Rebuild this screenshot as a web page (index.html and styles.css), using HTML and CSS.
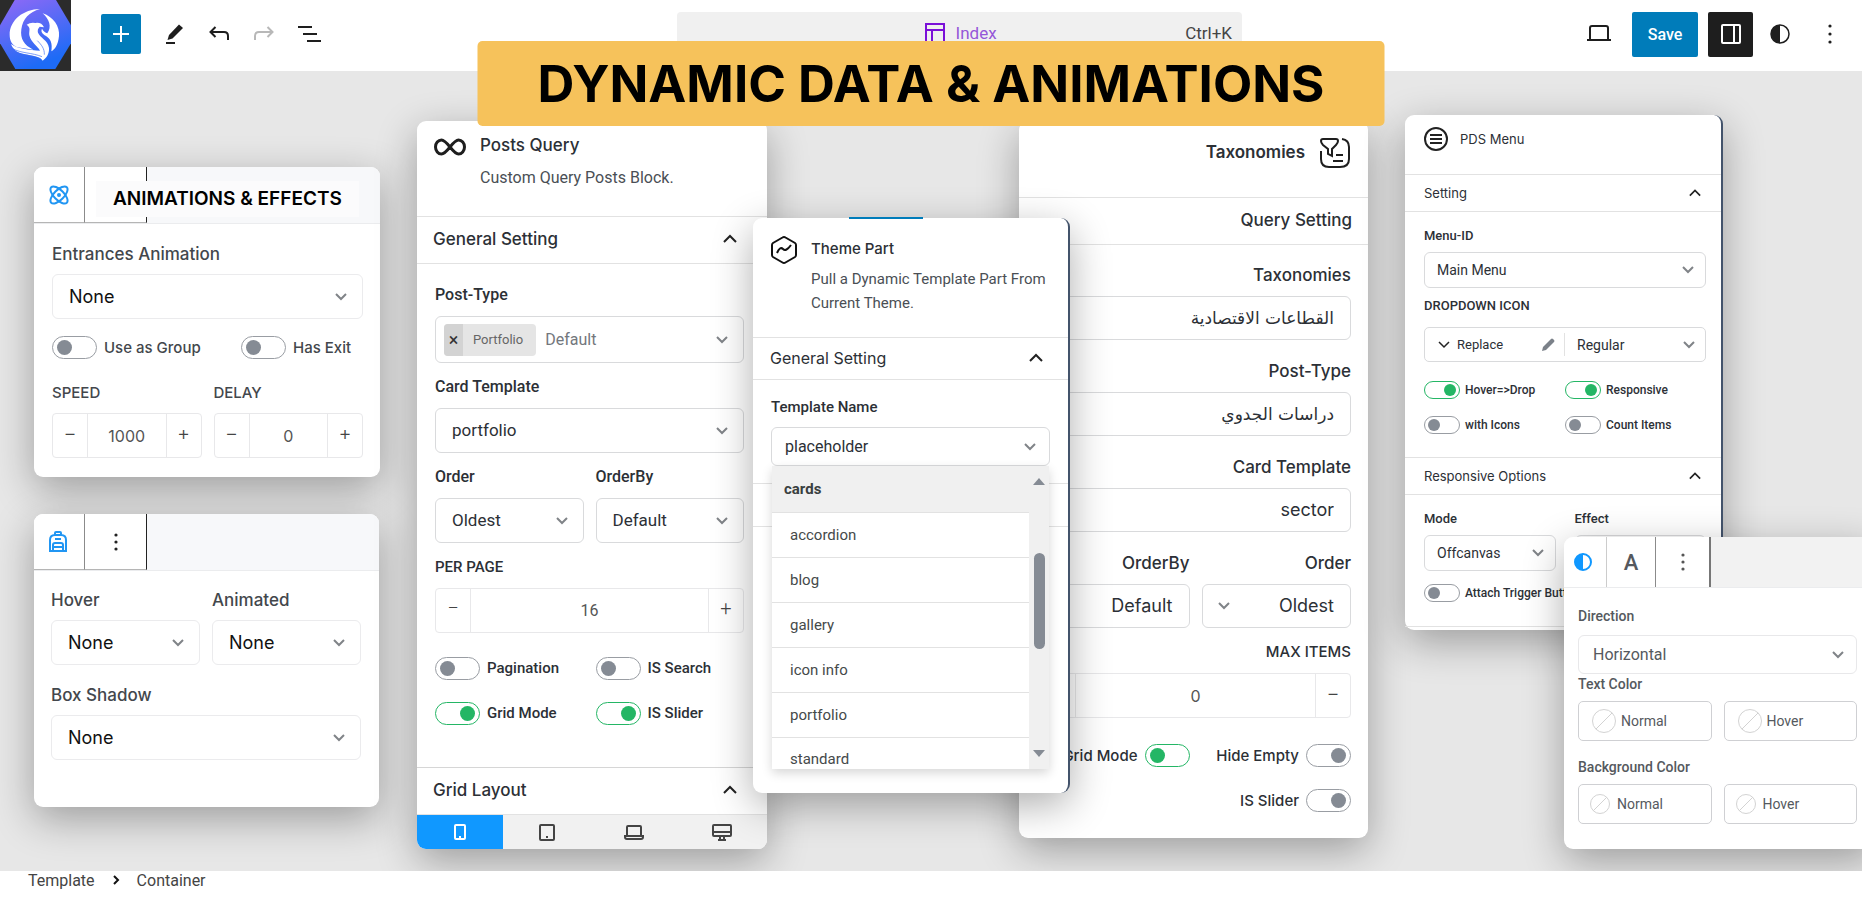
FILE: index.html
```html
<!DOCTYPE html>
<html lang="en">
<head>
<meta charset="utf-8">
<title>Dynamic Data &amp; Animations</title>
<link rel="stylesheet" href="styles.css">
</head>
<body>
<header class="topbar">
  <svg class="logo" viewBox="0 0 213 213" aria-hidden="true">
    <defs><linearGradient id="hex" x1="0" y1="0" x2="0.4" y2="1"><stop offset="0" stop-color="#9069f6"/><stop offset="1" stop-color="#1d6bf6"/></linearGradient></defs>
    <rect width="213" height="213" fill="#2b2b2b"/>
    <path d="M44 0H168L213 76V130L166 207H46L0 130V76Z" fill="url(#hex)"/>
    <g fill="#fff">
      <path d="M120 27C70 28 29 60 29 105C29 122 36 136 52 142L100 149C72 136 60 116 64 88C68 56 88 36 120 27Z"/>
      <path d="M80 74Q92 66 106 69Q124 66 132 82L119 80Q111 88 114 98C120 114 144 120 147 144C148 162 140 173 128 182C124 172 100 168 75 163C50 158 38 147 33 132C50 146 90 150 120 152C114 140 92 126 88 106C86 92 94 84 80 74Z"/>
      <path d="M128 40C160 50 180 80 177 108C174 135 165 148 154 154C158 130 152 117 138 108C126 101 122 94 126 86C130 94 136 98 142 100C156 80 148 58 128 40Z"/>
    </g>
    <path d="M38 146C62 160 98 158 126 170M46 156C68 168 96 164 122 176M112 122C124 134 134 146 133 164" fill="none" stroke="#3c6cf3" stroke-width="2"/>
  </svg>
  <div class="tools">
    <button class="add" aria-label="Add block"><svg width="24" height="24" viewBox="0 0 24 24"><path d="M12 4v16M4 12h16" stroke="#fff" stroke-width="2"/></svg></button>
    <button class="tool" aria-label="Tools"><svg width="24" height="24" viewBox="0 0 24 24"><path d="M17 2.500l4 3.500-10.500 10.500-5 1.500 1.500-5z" fill="#1e1e1e"/><path d="M4 21h9" stroke="#1e1e1e" stroke-width="2"/></svg></button>
    <button class="tool" aria-label="Undo"><svg width="24" height="24" viewBox="0 0 24 24"><path d="M8.500 5L3.500 10l5 5M3.500 10H17q4 0 4 4v4" fill="none" stroke="#1e1e1e" stroke-width="2"/></svg></button>
    <button class="tool" aria-label="Redo" disabled><svg width="24" height="24" viewBox="0 0 24 24"><path d="M15.500 5l5 5-5 5M20.500 10H7q-4 0-4 4v4" fill="none" stroke="#b8b8b8" stroke-width="2"/></svg></button>
    <button class="tool" aria-label="Document overview"><svg width="26" height="24" viewBox="0 0 26 24"><path d="M1 5h14M6 12h14M10 19h14" stroke="#1e1e1e" stroke-width="2"/></svg></button>
  </div>
  <button class="command">
    <span class="command-title"><svg width="22" height="22" viewBox="0 0 22 22"><path d="M2 2h18v18H2zM2 8h18M8 8v12" fill="none" stroke="#7b10d8" stroke-width="2"/></svg>Index</span>
    <span class="command-key">Ctrl+K</span>
  </button>
  <div class="actions">
    <button class="tool" aria-label="View"><svg width="28" height="24" viewBox="0 0 28 24"><path d="M5 17V6q0-2 2-2h14q2 0 2 2v11" fill="none" stroke="#1e1e1e" stroke-width="2"/><path d="M2 18h24" stroke="#1e1e1e" stroke-width="2"/></svg></button>
    <button class="save">Save</button>
    <button class="settings" aria-label="Settings"><svg width="22" height="22" viewBox="0 0 22 22"><rect x="2" y="2" width="18" height="18" rx="1" fill="none" stroke="#fff" stroke-width="2"/><path d="M14 2v18" stroke="#fff" stroke-width="2"/></svg></button>
    <button class="tool" aria-label="Styles"><svg width="22" height="22" viewBox="0 0 22 22"><circle cx="11" cy="11" r="9" fill="none" stroke="#1e1e1e" stroke-width="1.500"/><path d="M11 2a9 9 0 0 0 0 18z" fill="#1e1e1e"/></svg></button>
    <button class="tool" aria-label="Options"><svg width="22" height="22" viewBox="0 0 22 22"><g fill="#1e1e1e"><circle cx="11" cy="3" r="1.600"/><circle cx="11" cy="11" r="1.600"/><circle cx="11" cy="19" r="1.600"/></g></svg></button>
  </div>
</header>

<main class="canvas">
  <section class="panel soft effects">
    <div class="tabs">
      <button class="tab" aria-label="Effects"><svg width="20" height="20" viewBox="0 0 20 20" fill="none" stroke="#2196f3" stroke-width="2"><ellipse cx="10" cy="10" rx="11" ry="5" transform="rotate(45 10 10)"/><ellipse cx="10" cy="10" rx="11" ry="5" transform="rotate(-45 10 10)"/><circle cx="10" cy="10" r="1"/></svg></button>
      <button class="tab wide dark" aria-label="Options"></button>
      <h2 class="badge">ANIMATIONS &amp; EFFECTS</h2>
    </div>
    <div class="body">
      <label class="label" for="entrance">Entrances Animation</label>
      <select id="entrance" class="control"><option>None</option></select>
      <div class="switches">
        <label class="switch"><input type="checkbox">Use as Group</label>
        <label class="switch"><input type="checkbox">Has Exit</label>
      </div>
      <div class="pair">
        <div><label class="label caps" for="speed">SPEED</label>
          <div class="stepper"><button aria-label="Less">−</button><input id="speed" value="1000"><button aria-label="More">+</button></div></div>
        <div><label class="label caps" for="delay">DELAY</label>
          <div class="stepper"><button aria-label="Less">−</button><input id="delay" value="0"><button aria-label="More">+</button></div></div>
      </div>
    </div>
  </section>

  <section class="panel soft hover">
    <div class="tabs">
      <button class="tab" aria-label="Container"><svg width="20" height="22" viewBox="0 0 20 22" fill="none" stroke="#2196f3" stroke-width="2"><path d="M7 4V2q0-1 1-1h4q1 0 1 1v2M2 20V9q0-5 5-5h6q5 0 5 5v11zM5 20v-6q0-2 2-2h6q2 0 2 2v6M5 16h10M7 8h6"/></svg></button>
      <button class="tab wide dark" aria-label="Options"><svg width="6" height="20" viewBox="0 0 6 20"><g fill="#222"><circle cx="3" cy="3" r="1.600"/><circle cx="3" cy="10" r="1.600"/><circle cx="3" cy="17" r="1.600"/></g></svg></button>
    </div>
    <div class="body">
      <div class="pair">
        <div><label class="label" for="hover">Hover</label><select id="hover" class="control"><option>None</option></select></div>
        <div><label class="label" for="animated">Animated</label><select id="animated" class="control"><option>None</option></select></div>
      </div>
      <label class="label" for="shadow">Box Shadow</label>
      <select id="shadow" class="control"><option>None</option></select>
    </div>
  </section>

  <section class="panel query">
    <div class="intro">
      <svg width="32" height="20" viewBox="0 0 32 20"><path d="M16 10C12 5 10 3 7.500 3a6 7 0 0 0 0 14C10 17 12 15 16 10S22 3 24.500 3a6 7 0 0 1 0 14C22 17 20 15 16 10Z" fill="none" stroke="#1e1e1e" stroke-width="3"/></svg>
      <div><h2>Posts Query</h2><p>Custom Query Posts Block.</p></div>
    </div>
    <button class="section">General Setting<svg class="up" viewBox="0 0 14 10"><path d="M1 8l6-6 6 6"/></svg></button>
    <div class="body">
      <label class="label" for="ptype">Post-Type</label>
      <div class="control tags"><span class="tag"><button aria-label="Remove Portfolio">×</button><span>Portfolio</span></span><input id="ptype" placeholder="Default"></div>
      <label class="label" for="card">Card Template</label>
      <select id="card" class="control"><option>portfolio</option></select>
      <div class="pair">
        <div><label class="label" for="order">Order</label><select id="order" class="control"><option>Oldest</option></select></div>
        <div><label class="label" for="orderby">OrderBy</label><select id="orderby" class="control"><option>Default</option></select></div>
      </div>
      <label class="label caps" for="perpage">PER PAGE</label>
      <div class="stepper"><button aria-label="Less">−</button><input id="perpage" value="16"><button aria-label="More">+</button></div>
      <div class="switches">
        <label class="switch"><input type="checkbox">Pagination</label>
        <label class="switch"><input type="checkbox">IS Search</label>
        <label class="switch"><input type="checkbox" checked>Grid Mode</label>
        <label class="switch"><input type="checkbox" checked>IS Slider</label>
      </div>
    </div>
    <button class="section">Grid Layout<svg class="up" viewBox="0 0 14 10"><path d="M1 8l6-6 6 6"/></svg></button>
    <div class="devices">
      <button class="on" aria-label="Phone"><svg width="22" height="20" viewBox="0 0 22 20"><rect x="6" y="3" width="10" height="14" rx="1"/><path d="M10 15h2"/></svg></button>
      <button aria-label="Tablet"><svg width="22" height="20" viewBox="0 0 22 20"><rect x="4" y="3" width="14" height="15" rx="1"/><path d="M10 15h2"/></svg></button>
      <button aria-label="Laptop"><svg width="22" height="20" viewBox="0 0 22 20"><path d="M4 13V5q0-1 1-1h12q1 0 1 1v8M2 14h18v1q0 2-2 2H4q-2 0-2-2z"/></svg></button>
      <button aria-label="Desktop"><svg width="22" height="20" viewBox="0 0 22 20"><rect x="2" y="3" width="18" height="11" rx="1"/><path d="M2 10h18M9 14v4M13 14v4M7 18h8"/></svg></button>
    </div>
  </section>

  <section class="panel taxonomy" dir="rtl">
    <div class="intro">
      <svg width="32" height="32" viewBox="0 0 32 32" fill="none" stroke="#1e1e1e" stroke-width="2"><path d="M2 4q0-2 2-2h13q2 0 2 2 0 2-2 4l-4 4v7l-4-2v-5L4 8Q2 6 2 4zM2 14v8q0 8 8 8h11q9 0 9-8V10q0-7-7-8M17 18h7M14 24h10"/></svg>
      <h2>Taxonomies</h2>
    </div>
    <button class="section">Query Setting</button>
    <div class="body">
      <label class="label" for="tax">Taxonomies</label>
      <select id="tax" class="control arabic"><option>القطاعات الاقتصادية</option></select>
      <label class="label" for="tptype">Post-Type</label>
      <select id="tptype" class="control arabic"><option>دراسات الجدوي</option></select>
      <label class="label" for="tcard">Card Template</label>
      <select id="tcard" class="control"><option>sector</option></select>
      <div class="pair">
        <div><label class="label" for="torder">Order</label><select id="torder" class="control"><option>Oldest</option></select></div>
        <div><label class="label" for="torderby">OrderBy</label><select id="torderby" class="control"><option>Default</option></select></div>
      </div>
      <label class="label caps" for="max">MAX ITEMS</label>
      <div class="stepper"><button aria-label="Less">−</button><input id="max" value="0"><button aria-label="More">+</button></div>
      <div class="switches">
        <label class="switch"><input type="checkbox">Hide Empty</label>
        <label class="switch"><input type="checkbox" checked>Grid Mode</label>
        <label class="switch"><input type="checkbox">IS Slider</label>
      </div>
    </div>
  </section>

  <section class="panel theme">
    <div class="intro">
      <svg width="28" height="30" viewBox="0 0 28 30" fill="none" stroke="#111" stroke-width="2"><path d="M12.500 2.500q1.500-1 3 0L25 8q1 .7 1 2v10q0 1.300-1 2l-9.500 5.500q-1.500 1-3 0L3 22q-1-.7-1-2V10q0-1.300 1-2z"/><path d="M7 18q3-7 6-4t8-4"/></svg>
      <div><h2>Theme Part</h2><p>Pull a Dynamic Template Part From Current Theme.</p></div>
    </div>
    <button class="section">General Setting<svg class="up" viewBox="0 0 14 10"><path d="M1 8l6-6 6 6"/></svg></button>
    <div class="body">
      <label class="label" for="tname">Template Name</label>
      <div class="combo">
        <select id="tname" class="control"><option>placeholder</option></select>
        <div class="menu">
          <div class="menu-list">
            <strong>cards</strong>
            <ul><li>accordion</li><li>blog</li><li>gallery</li><li>icon info</li><li>portfolio</li><li>standard</li></ul>
          </div>
          <div class="scrollbar"><span class="arrow-up"></span><span class="thumb"></span><span class="arrow-down"></span></div>
        </div>
      </div>
    </div>
    <div class="rule"></div>
  </section>

  <section class="panel pds">
    <div class="intro">
      <svg width="24" height="24" viewBox="0 0 24 24" fill="none" stroke="#222" stroke-width="2"><circle cx="12" cy="12" r="11"/><path d="M6 8h12M6 12h12M6 16h12"/></svg>
      <h2>PDS Menu</h2>
    </div>
    <button class="section">Setting<svg class="up" viewBox="0 0 14 10"><path d="M1 8l6-6 6 6"/></svg></button>
    <div class="body">
      <label class="label" for="menuid">Menu-ID</label>
      <select id="menuid" class="control"><option>Main Menu</option></select>
      <label class="label" for="weight">DROPDOWN ICON</label>
      <div class="icon-field">
        <button><svg width="12" height="8" viewBox="0 0 12 8"><path d="M1 1l5 5 5-5" fill="none" stroke="#222" stroke-width="1.500"/></svg>Replace<svg class="pen" width="14" height="14" viewBox="0 0 14 14"><path d="M1 13l1-4 8-8q1-1 2 0l1 1q1 1 0 2l-8 8z" fill="#7b8189"/></svg></button>
        <select id="weight"><option>Regular</option></select>
      </div>
      <div class="switches">
        <label class="switch"><input type="checkbox" checked>Hover=&gt;Drop</label>
        <label class="switch"><input type="checkbox" checked>Responsive</label>
        <label class="switch"><input type="checkbox">with Icons</label>
        <label class="switch"><input type="checkbox">Count Items</label>
      </div>
    </div>
    <button class="section">Responsive Options<svg class="up" viewBox="0 0 14 10"><path d="M1 8l6-6 6 6"/></svg></button>
    <div class="body last">
      <div class="pair">
        <div><label class="label" for="mode">Mode</label><select id="mode" class="control"><option>Offcanvas</option></select></div>
        <div><label class="label" for="effect">Effect</label><select id="effect" class="control"></select></div>
      </div>
      <label class="switch"><input type="checkbox">Attach Trigger Button</label>
    </div>
    <div class="rule"></div>
  </section>

  <section class="panel colors">
    <div class="tabs">
      <button class="tab" aria-label="Colors"><svg width="20" height="20" viewBox="0 0 20 20"><circle cx="10" cy="10" r="8" fill="#fff" stroke="#1098ff" stroke-width="2"/><path d="M10 2a8 8 0 0 0 0 16z" fill="#1098ff"/></svg></button>
      <button class="tab letter">A</button>
      <button class="tab wide" aria-label="Options"><svg width="6" height="20" viewBox="0 0 6 20"><g fill="#555"><circle cx="3" cy="3" r="1.600"/><circle cx="3" cy="10" r="1.600"/><circle cx="3" cy="17" r="1.600"/></g></svg></button>
    </div>
    <div class="body">
      <label class="label" for="direction">Direction</label>
      <select id="direction" class="control"><option>Horizontal</option></select>
      <h3 class="label">Text Color</h3>
      <div class="pair"><button class="swatch large"><i></i>Normal</button><button class="swatch large"><i></i>Hover</button></div>
      <h3 class="label second">Background Color</h3>
      <div class="pair"><button class="swatch"><i></i>Normal</button><button class="swatch"><i></i>Hover</button></div>
    </div>
  </section>
</main>

<h1 class="banner">DYNAMIC DATA &amp; ANIMATIONS</h1>

<footer class="crumbs"><a href="#">Template</a><svg width="8" height="12" viewBox="0 0 8 12"><path d="M2 2l4 4-4 4" fill="none" stroke="#111" stroke-width="2"/></svg><a href="#">Container</a></footer>
</body>
</html>
```
FILE: styles.css
```css
* { box-sizing: border-box; }

body {
  margin: 0;
  min-height: 100vh;
  display: flex;
  flex-direction: column;
  position: relative;
  overflow: hidden;
  background: #e7e7e7;
  color: #2c3036;
  font-family: Roboto, "Liberation Sans", sans-serif;
  font-size: 16px;
}

h1, h2, h3, p, ul { margin: 0; padding: 0; }
button, input, select { font: inherit; color: inherit; border: 0; background: none; padding: 0; margin: 0; min-width: 0; }
svg { flex: none; }

/* Top bar */
.topbar { display: flex; align-items: center; height: 71px; background: #fff; position: relative; }
.logo { width: 71px; height: 71px; }
.tools { display: flex; align-items: center; gap: 21px; margin-left: 30px; }
.tool, .add, .settings { display: flex; align-items: center; justify-content: center; }
.add { width: 40px; height: 40px; background: #007cba; border-radius: 2px; margin-top: -3px; }
.tools .tool { margin-top: -3px; }
.command {
  position: absolute; left: 50%; top: 12px; width: 565px; height: 45px; margin-left: -254px;
  display: flex; align-items: center; background: #f0f0f0; border-radius: 4px; padding: 0 10px 3px;
  font-size: 17px;
}
.command-title { flex: 1; display: flex; align-items: center; justify-content: center; gap: 10px; color: #9557d8; padding-left: 48px; }
.command-key { color: #444; }
.actions { display: flex; align-items: center; gap: 10px; margin-left: auto; padding-right: 21px; }
.actions > * { margin-top: -3px; }
.actions .tool:first-child { margin-right: 9px; }
.actions .tool:nth-child(4) { margin: -3px 18px 0 6px; }
.save { width: 66px; height: 45px; background: #007cba; color: #fff; border-radius: 2px; font-size: 16px; font-weight: 500; }
.settings { width: 45px; height: 45px; background: #1e1e1e; border-radius: 2px; }

.banner {
  position: absolute; left: 50%; top: 41px; transform: translateX(-50%);
  padding: 0 60px; border-radius: 5px; background: #f6c25b; color: #000;
  font: 700 51px/85px Inter, sans-serif; white-space: nowrap;
}

/* Panels on the canvas */
.canvas { flex: 1; position: relative; }
.panel { position: absolute; background: #fff; border-radius: 9px; box-shadow: 0 12px 40px rgba(0, 0, 0, .32); }
.effects { left: 34px; top: 96px; width: 346px; }
.hover { left: 34px; top: 443px; width: 345px; }
.query { left: 417px; top: 50px; width: 350px; }
.taxonomy { left: 1019px; top: 50px; width: 349px; font-family: Inter, sans-serif; }
.theme { left: 753px; top: 147px; width: 317px; border-right: 2px solid #43536b; }
.pds { left: 1405px; top: 44px; width: 318px; border-right: 2px solid #43536b; font-size: 13px; }
.colors { left: 1564px; top: 466px; width: 312px; }

.intro { display: flex; border-bottom: 1px solid #e2e2e2; }
.intro h2 { font: 500 17px/20px Inter, sans-serif; }
.section {
  display: flex; width: 100%; align-items: center; justify-content: space-between;
  font: 500 17px/20px Inter, sans-serif; border-bottom: 1px solid #e2e2e2; text-align: start;
}
.up { width: 14px; height: 10px; fill: none; stroke: #222; stroke-width: 2; }
.rule { border-top: 1px solid #e2e2e2; }

.body { display: flex; flex-direction: column; }
.label { display: block; font-weight: 500; line-height: 20px; }
.control {
  width: 100%; height: 45px; border: 1px solid #d9dadc; border-radius: 6px; padding: 0 16px 1px; font-size: 17px;
  appearance: none; background: #fff url("data:image/svg+xml,%3Csvg xmlns='http://www.w3.org/2000/svg' width='12' height='8'%3E%3Cpath d='M1 1l5 5 5-5' fill='none' stroke='%23808488' stroke-width='2'/%3E%3C/svg%3E") no-repeat right 15px center;
}
.pair { display: grid; grid-template-columns: 1fr 1fr; gap: 12px; }
.pair .label + * { margin-top: 11px; }

.stepper { display: flex; height: 45px; border: 1px solid #e8e8ea; border-radius: 4px; }
.stepper button { width: 34px; font-size: 20px; font-weight: 300; padding-bottom: 6px; color: #444; }
.stepper input { flex: 1; width: 0; text-align: center; border: solid #e8e8ea; border-width: 0 1px; color: #555; }

.switches { display: grid; grid-template-columns: 1fr 1fr; column-gap: 12px; row-gap: 22px; }
.switch { display: flex; align-items: center; gap: 7px; font-size: 15px; font-weight: 500; white-space: nowrap; line-height: 23px; }
.switch input {
  appearance: none; flex: none; display: flex; align-items: center; width: 45px; height: 23px; padding: 0 4px;
  border: 1px solid #999da3; border-radius: 12px; background: #fff; color: #858b94;
}
.switch input::before { content: ""; width: 15px; height: 15px; border-radius: 50%; background: currentColor; }
.switch input:checked { border-color: #24b665; color: #24b665; justify-content: flex-end; }

/* Icon tabs */
.tabs { display: flex; height: 57px; background: #f7f8fa; border-bottom: 1px solid #ebecee; border-radius: 9px 9px 0 0; position: relative; }
.tab { display: flex; align-items: center; justify-content: center; width: 51px; background: #fff; border-right: 1px solid #8b8b8b; border-bottom: 1px solid #b5b5b5; }
.tab:first-child { border-top-left-radius: 9px; }
.tab.wide { width: 62px; }
.tab.dark { border-right-color: #222; }
.badge { position: absolute; left: 62px; top: 14px; padding: 0 17px; background: #fbfbfc; color: #000; font: 600 19px/36px Inter, sans-serif; white-space: nowrap; }

/* Effects and hover panels */
.soft { font-family: Inter, sans-serif; color: #43474c; }
.soft .body { padding: 20px 17px 19px 18px; }
.soft .label { font-size: 17px; }
.soft .label.caps, .label.caps { font-size: 15px; }
.soft .control { border-color: #ebebed; color: #111; margin-top: 10px; font-size: 18px; }
.soft .pair .label + * { margin-top: 10px; }
.soft .switches { margin: 17px 0 24px; grid-template-columns: 189px 1fr; column-gap: 0; }
.hover .tab:first-child { padding-right: 3px; }
.hover .body { padding: 19px 18px 47px 17px; }
.hover .pair { margin-bottom: 20px; }

/* Posts query */
.query .intro { padding: 14px 17px 0; gap: 14px; height: 96px; }
.query .intro svg { margin-top: 2px; }
.query .intro p { line-height: 24px; margin-top: 11px; color: #4a4f55; }
.query .section { padding: 12px 30px 14px 16px; }
.query .body { padding: 21px 23px 42px 18px; border-bottom: 1px solid #d6d6d6; }
.query .body > .label + * { margin-top: 11px; }
.query .control { margin-bottom: 14px; }
.query .tags { height: 47px; display: flex; align-items: center; gap: 9px; padding: 0 9px 0 8px; }
.tag { display: flex; align-items: center; height: 32px; background: #e5e5e5; border-radius: 4px; font-size: 13px; color: #666; overflow: hidden; }
.tag button { width: 19px; height: 32px; background: #d3d3d3; font-size: 18px; color: #333; }
.tag span { padding: 0 13px 0 10px; }
.tags input { flex: 1; width: 0; outline: 0; font-size: 16px; }
.tags input::placeholder { color: #73777d; opacity: 1; }
.query .switches { margin-top: 24px; }
.devices { display: grid; grid-template-columns: 86px 87px 87px 1fr; height: 34px; background: #f1f1f1; border-radius: 0 0 9px 9px; overflow: hidden; }
.devices button { display: flex; align-items: center; justify-content: center; }
.devices svg { fill: none; stroke: #444; stroke-width: 2; }
.devices .on { background: #1098ff; }
.devices .on svg { stroke: #fff; }

/* Taxonomies */
.taxonomy .intro { padding: 16px 17px 0; gap: 14px; height: 77px; }
.taxonomy h2 { font-weight: 600; line-height: 30px; }
.taxonomy .section { padding: 12px 16px 14px; }
.taxonomy .body { padding: 20px 17px 26px 21px; }
.taxonomy .label { font-size: 17px; }
.taxonomy .label.caps { font-size: 15px; }
.taxonomy .body > .label + * { margin-top: 11px; }
.taxonomy .control { height: 44px; margin-bottom: 21px; background-position: left 15px center; font-size: 18px; }
.taxonomy .pair .control { margin-bottom: 14px; }
.taxonomy .arabic { font-family: "DejaVu Sans", sans-serif; font-size: 17px; }
.taxonomy .switches { margin-top: 26px; }

/* Theme part */
.theme::before { content: ""; position: absolute; left: 96px; top: -1px; width: 74px; height: 2px; background: #007cba; }
.theme .intro { padding: 17px 22px 0 17px; gap: 13px; height: 120px; }
.theme .intro h2 { font-size: 15px; line-height: 28px; }
.theme .intro p { line-height: 24px; color: #4a4f55; margin-top: 4px; margin-right: -6px; font-size: 15px; }
.theme .section { padding: 10px 25px 11px 17px; font-size: 16px; font-weight: 400; }
.theme .body { padding: 17px 18px 17px; border-bottom: 1px solid #e2e2e2; }
.theme .label { font-size: 15px; }
.theme .control { height: 39px; font-size: 16px; padding: 0 13px 1px; margin-top: 10px; background-position: right 13px center; }
.combo { position: relative; }
.menu { position: absolute; left: 1px; right: 1px; top: 49px; height: 303px; display: flex; background: #f0f0f0; box-shadow: 0 4px 10px rgba(0, 0, 0, .16); z-index: 2; }
.menu-list { flex: 1; overflow: hidden; }
.menu strong { display: block; padding-left: 12px; font-weight: 700; font-size: 15px; line-height: 46px; color: #3a3f3f; }
.menu ul { list-style: none; background: #fff; }
.menu li { height: 45px; padding-left: 18px; border-top: 1px solid #e2e2e2; font-size: 15px; line-height: 44px; color: #454a4a; }
.menu li:last-child { height: 32px; line-height: 42px; }
.scrollbar { width: 20px; display: flex; flex-direction: column; align-items: center; padding: 12px 0; }
.arrow-up { border: 6px solid transparent; border-top: 0; border-bottom: 7px solid #858b94; }
.arrow-down { border: 6px solid transparent; border-bottom: 0; border-top: 7px solid #858b94; margin-top: auto; }
.thumb { width: 11px; height: 96px; border-radius: 6px; background: #858b94; margin-top: 68px; }
.theme > .rule { margin: 42px 0 266px; }

/* PDS menu */
.pds .intro { padding: 12px 19px; gap: 12px; height: 60px; }
.pds h2 { font-size: 13px; line-height: 24px; font-weight: 400; }
.pds .section { font-size: 13px; padding: 8px 20px 8px 19px; font-weight: 400; }
.pds .up { width: 12px; }
.pds .body { padding: 16px 15px 23px 19px; }
.pds .body.last { padding-bottom: 24px; }
.pds .body + .section { border-top: 1px solid #e2e2e2; }
.pds .label { line-height: 16px; }
.pds .control { height: 36px; font-size: 14px; padding: 0 12px 1px; margin: 8px 0 10px; background-position: right 11px center; }
.icon-field { display: grid; grid-template-columns: 1fr 1fr; height: 35px; margin: 13px 0 19px; border: 1px solid #d9dadc; border-radius: 5px; }
.icon-field button { display: flex; align-items: center; gap: 7px; padding: 0 9px 0 13px; margin: 5px 0; border-right: 1px solid #e2e2e2; }
.icon-field .pen { margin-left: auto; }
.icon-field select { appearance: none; padding: 0 12px; font-size: 14px; background: url("data:image/svg+xml,%3Csvg xmlns='http://www.w3.org/2000/svg' width='12' height='8'%3E%3Cpath d='M1 1l5 5 5-5' fill='none' stroke='%23808488' stroke-width='2'/%3E%3C/svg%3E") no-repeat right 10px center; }
.pds .switches { row-gap: 17px; column-gap: 0; }
.pds .switch { gap: 5px; line-height: 18px; font-size: 12px; }
.pds .switch input { width: 36px; height: 18px; padding: 0 3px; }
.pds .switch input::before { width: 12px; height: 12px; }
.pds .pair { gap: 19px; }
.pds .pair .control { margin: 8px 0 13px; }
.pds > .rule { margin-bottom: 3px; }

/* Colors */
.colors { color: #55595e; }
.colors .tabs { height: 51px; background: #f2f2f2; }
.colors .tab { width: 43px; border-bottom: 0; padding-right: 4px; border-right-color: #ccc; }
.colors .tab.letter { width: 49px; border-right-color: #8b8b8b; font-size: 22px; font-weight: 500; padding: 0; }
.colors .tab.wide { width: 55px; padding: 0; border-right: 2px solid #777; }
.colors .body { padding: 20px 19px 25px 14px; }
.colors .label { font-size: 14px; line-height: 16px; }
.colors .control { height: 39px; font-size: 16px; margin: 11px 0 2px; border-color: #e8e8ea; padding: 0 14px 1px; background-position: right 12px center; }
.colors .pair { margin-top: 9px; }
.colors .second { margin-top: 18px; }
.swatch { display: flex; align-items: center; gap: 7px; height: 40px; padding: 0 11px; border: 1px solid #cfd0d3; border-radius: 5px; font-size: 14px; }
.swatch i { width: 20px; height: 20px; border: 1px solid #d3d3d3; border-radius: 50%; background: linear-gradient(135deg, transparent 48%, #d3d3d3 48%, #d3d3d3 52%, transparent 52%); }
.swatch.large { gap: 5px; padding: 0 13px; }
.swatch.large i { width: 24px; height: 24px; }

/* Breadcrumbs */
.crumbs { display: flex; align-items: center; gap: 17px; height: 26px; padding: 0 28px 8px; background: #fff; position: relative; }
.crumbs a { color: #444; text-decoration: none; }
```
